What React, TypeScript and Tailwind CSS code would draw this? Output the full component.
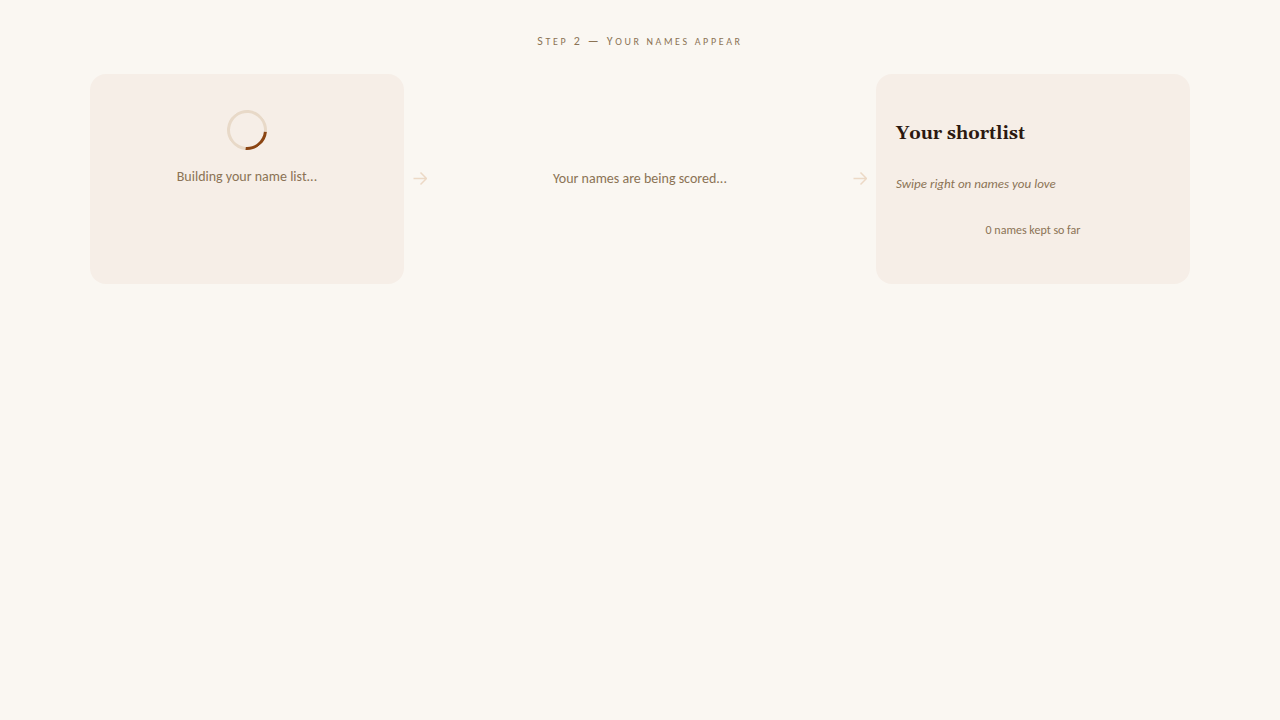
type Phase = 'building' | 'ready'

function Arrow() {
  return (
    <div className="flex items-center justify-center text-[#ecd9c6]" aria-hidden="true">
      <svg width="14" height="14" viewBox="0 0 14 14" fill="none" stroke="currentColor" strokeWidth="1.5">
        <path d="M0.5 6.5h13M7.5 0.5l6 6-6 6" />
      </svg>
    </div>
  )
}

function BuildingCard({ phase }: { phase: Phase }) {
  return (
    <section className="rounded-2xl bg-[#f6eee7] px-5 py-9 text-center">
      {phase === 'building' && (
        <div role="status">
          {/* Spinner */}
          <div className="mx-auto mb-4 size-10 rotate-[140deg] rounded-full border-3 border-[#e8d9c8] border-t-[#8b4513]" />
          <p className="text-sm leading-[22px] text-[#8b7355]">Building your name list...</p>
        </div>
      )}
    </section>
  )
}

function ShortlistCard({ kept }: { kept: number }) {
  return (
    <section className="rounded-2xl bg-[#f6eee7] px-5 py-11">
      <h2 className="font-[Gelasio,Georgia,'Liberation_Serif',serif] text-lg leading-8 font-bold text-[#2c1810]">
        Your shortlist
      </h2>
      <p className="mt-6 text-[13px] leading-5 text-[#8b7355] italic">Swipe right on names you love</p>
      <p className="mt-7 text-center text-xs text-[#8b7355]">{kept} names kept so far</p>
    </section>
  )
}

export default function App() {
  return (
    <main className="min-h-screen bg-[#faf7f2] px-6 pt-8 font-[Carlito,Calibri,Lato,sans-serif]">
      <div className="mx-auto max-w-[1100px]">
        {/* Small caps, with the small letters a little taller than the browser's own */}
        <h1 className="mb-6 text-center text-xs leading-[18px] tracking-[0.22em] text-[#8b7355] uppercase">
          S<span className="text-[10px] leading-none">tep</span> 2 — Y
          <span className="text-[10px] leading-none">our names appear</span>
        </h1>
        <div className="grid min-h-[210px] grid-cols-[1fr_32px_1.3fr_32px_1fr]">
          <BuildingCard phase="building" />
          <Arrow />
          <div className="flex items-center justify-center">
            <p className="text-sm text-[#8b7355]">Your names are being scored...</p>
          </div>
          <Arrow />
          <ShortlistCard kept={0} />
        </div>
      </div>
    </main>
  )
}
